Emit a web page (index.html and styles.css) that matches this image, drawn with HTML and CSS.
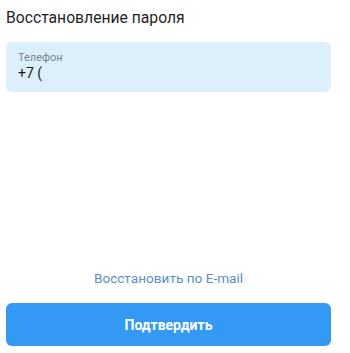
FILE: index.html
```html
<!DOCTYPE html>
<html lang="ru">
<head>
    <meta charset="UTF-8">
    <meta name="viewport" content="width=device-width, initial-scale=1.0">
    <title>Восстановление пароля</title>
    <link rel="stylesheet" href="styles.css">
</head>
<body>
    <div class="page">
        <h1 class="title">Восстановление пароля</h1>

        <!-- Поле телефона -->
        <label class="field">
            <span class="field-label">Телефон</span>
            <input class="field-input" type="tel" value="+7 (">
        </label>

        <div class="spacer"></div>

        <a class="link" href="#">Восстановить по E-mail</a>
        <button class="submit-btn">Подтвердить</button>
    </div>
</body>
</html>
```

FILE: styles.css
```css
/* Общие стили */
body {
    margin: 0;
    padding: 0;
    background-color: #fff;
    font-family: Roboto, "Noto Sans", sans-serif;
    color: #222;
}

.page {
    display: flex;
    flex-direction: column;
    height: 353px;
    box-sizing: border-box;
    padding: 8px 19px 7px 6px;
}

.title {
    margin: 0;
    font-size: 15.7px;
    font-weight: 400;
    line-height: 19px;
    color: #1f1f1f;
}

/* Поле ввода */
.field {
    display: flex;
    flex-direction: column;
    margin-top: 15px;
    height: 50px;
    box-sizing: border-box;
    padding: 9px 12px 0;
    background-color: #dcf0fc;
    border-radius: 6px;
}

.field-label {
    font-size: 11px;
    line-height: 13px;
    color: #7a8590;
}

.field-input {
    margin: 1px 0 0;
    padding: 0;
    border: none;
    background: transparent;
    font-family: inherit;
    font-size: 14px;
    line-height: 17px;
    color: #1a1a1a;
    outline: none;
}

.spacer {
    flex: 1;
}

.link {
    align-self: center;
    font-size: 13.6px;
    line-height: 16px;
    color: #5a8fca;
    text-decoration: none;
    margin-bottom: 17px;
}

.submit-btn {
    height: 43px;
    border: none;
    border-radius: 6px;
    background-color: #3399f4;
    color: #fff;
    font-family: inherit;
    font-size: 14px;
    font-weight: 700;
    cursor: pointer;
}
```
